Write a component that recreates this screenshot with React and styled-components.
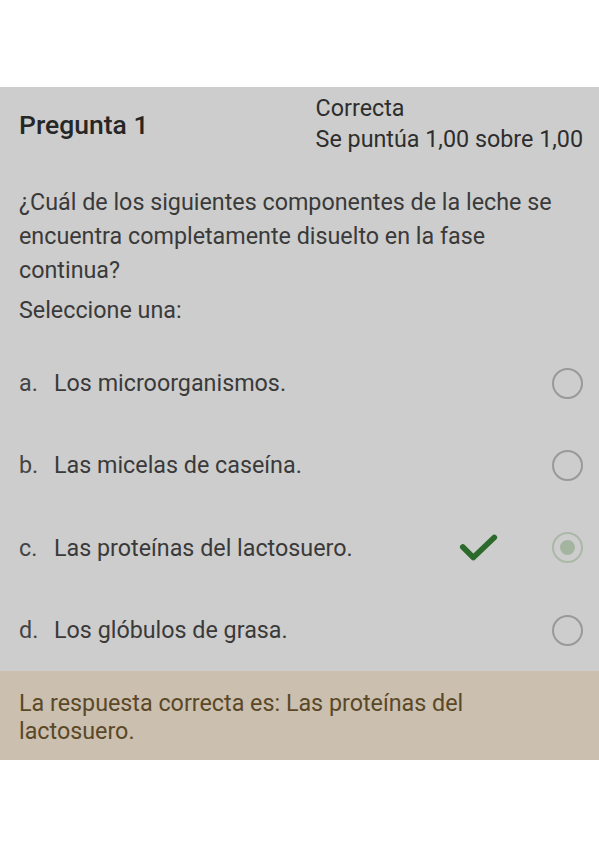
import React from "react";
import styled, { createGlobalStyle } from "styled-components";

const Global = createGlobalStyle`
  html, body { margin: 0; padding: 0; background: #ffffff; }
  body { font-family: Roboto, "Noto Sans", Arial, sans-serif; }
`;

const Page = styled.div`
  width: 599px;
  height: 848px;
  background: #fff;
  padding-top: 87px;
  box-sizing: border-box;
`;

const Panel = styled.section`
  background: #cdcdcd;
  padding: 6px 16px 0 19px;
`;

const Header = styled.header`
  display: flex;
  justify-content: space-between;
  align-items: center;
`;

const Title = styled.h2`
  margin: 0;
  font-size: 26.5px;
  font-weight: 500;
  color: #262626;
`;

const Status = styled.div`
  display: flex;
  flex-direction: column;
  font-size: 23.3px;
  line-height: 31px;
  color: #2e2e2e;
`;

const Question = styled.p`
  margin: 30px 0 0;
  font-size: 23.3px;
  line-height: 34px;
  color: #3a3a3a;
  padding-right: 20px;
`;

const Prompt = styled.p`
  margin: 6px 0 0;
  font-size: 23.3px;
  line-height: 34px;
  color: #3a3a3a;
`;

const Options = styled.ul`
  list-style: none;
  margin: 15px 0 0;
  padding: 0;
`;

const Option = styled.li`
  display: flex;
  align-items: center;
  height: 82.3px;
  font-size: 23.3px;
  color: #3a3a3a;
`;

const Letter = styled.span`
  width: 35px;
  color: #444;
`;

const Label = styled.span`
  flex: 1;
`;

const Mark = styled.span`
  width: 40px;
  display: flex;
  justify-content: center;
  margin-right: 53px;
`;

const Radio = styled.span`
  width: 27px;
  height: 27px;
  border-radius: 50%;
  border: 2.5px solid ${(p) => (p.$checked ? "#a9b9a6" : "#999999")};
  display: flex;
  align-items: center;
  justify-content: center;
  box-sizing: content-box;
  &::after {
    content: "";
    width: 15px;
    height: 15px;
    border-radius: 50%;
    background: ${(p) => (p.$checked ? "#a3b59f" : "transparent")};
  }
`;

const Feedback = styled.div`
  background: #cbbfb0;
  color: #5a4827;
  font-size: 23.3px;
  line-height: 28px;
  padding: 18px 100px 15px 19px;
`;

const Check = () => (
  <svg width="42" height="34" viewBox="0 0 42 34">
    <path
      d="M4 16 L15 27 L37 6"
      fill="none"
      stroke="#2b6a2b"
      strokeWidth="6"
      strokeLinecap="round"
      strokeLinejoin="round"
    />
  </svg>
);

const options = [
  { l: "a.", t: "Los microorganismos." },
  { l: "b.", t: "Las micelas de caseína." },
  { l: "c.", t: "Las proteínas del lactosuero.", checked: true },
  { l: "d.", t: "Los glóbulos de grasa." },
];

export default function App() {
  return (
    <Page>
      <Global />
      <Panel>
        <Header>
          <Title>Pregunta 1</Title>
          <Status>
            <span>Correcta</span>
            <span>Se puntúa 1,00 sobre 1,00</span>
          </Status>
        </Header>
        <Question>
          ¿Cuál de los siguientes componentes de la leche se encuentra completamente disuelto en la fase continua?
        </Question>
        <Prompt>Seleccione una:</Prompt>
        <Options>
          {options.map((o) => (
            <Option key={o.l}>
              <Letter>{o.l}</Letter>
              <Label>{o.t}</Label>
              <Mark>{o.checked ? <Check /> : null}</Mark>
              <Radio $checked={o.checked} />
            </Option>
          ))}
        </Options>
      </Panel>
      <Feedback>La respuesta correcta es: Las proteínas del lactosuero.</Feedback>
    </Page>
  );
}
